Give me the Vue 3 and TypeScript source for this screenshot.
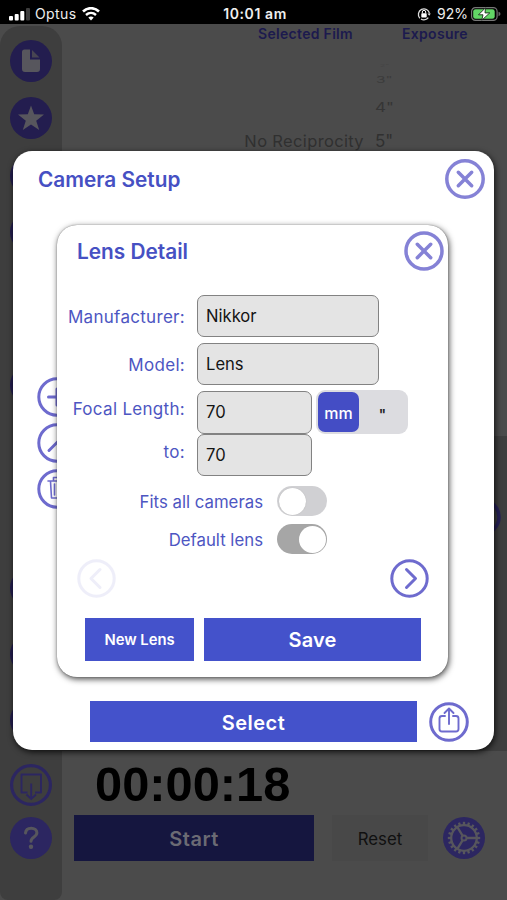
<script setup lang="ts">
import { ref } from 'vue'

interface RailItem { id: string; kind: string; gap: number }

const rail: RailItem[] = [
  { id: 'file', kind: 'file', gap: 0 },
  { id: 'favourite', kind: 'star', gap: 15 },
  { id: 'slot-a', kind: 'disc', gap: 16 },
  { id: 'slot-b', kind: 'disc', gap: 14 },
  { id: 'slot-c', kind: 'disc', gap: 111 },
  { id: 'slot-d', kind: 'disc', gap: 161 },
  { id: 'slot-e', kind: 'disc', gap: 24 },
  { id: 'slot-f', kind: 'disc', gap: 24 },
  { id: 'download', kind: 'download', gap: 23 },
  { id: 'help', kind: 'help', gap: 11 },
]

const manufacturer = ref('Nikkor')
const model = ref('Lens')
const focalFrom = ref('70')
const focalTo = ref('70')
const fitsAll = ref(false)
const defaultLens = ref(true)
const teeth = Array.from({ length: 20 }, (_, i) => i * 18)
</script>

<template>
  <div class="phone">
    <header class="status">
      <div class="carrier">
        <svg class="signal" width="22" height="14" viewBox="0 0 22 14">
          <rect x="0" y="9" width="4" height="4.500" rx="1" fill="#fff" />
          <rect x="5.700" y="7" width="4" height="6.500" rx="1" fill="#fff" />
          <rect x="11.300" y="4" width="4" height="9.500" rx="1" fill="#fff" />
          <rect x="17" y="1" width="4" height="12.500" rx="1" fill="#3d3d3d" />
        </svg>
        <span class="optus">Optus</span>
        <svg width="18" height="14" viewBox="0 0 18 14">
          <path d="M1 4.500 C5.500 0 12.500 0 17 4.500" fill="none" stroke="#fff" stroke-width="2.500" />
          <path d="M4 8 C7 5.200 11 5.200 14 8" fill="none" stroke="#fff" stroke-width="2.400" />
          <path d="M6.300 10.500 Q9 8.400 11.700 10.500 L9 13.400Z" fill="#fff" />
        </svg>
      </div>
      <div class="clock">10:01 am</div>
      <div class="power">
        <svg width="14" height="14" viewBox="0 0 14 14">
          <path d="M2.800 11.200 A5.600 5.600 0 1 1 12.500 6.500 M4 12 A5.600 5.600 0 0 0 11.300 10.600" fill="none" stroke="#ddd" stroke-width="1.300" />
          <rect x="4.300" y="6.200" width="5.400" height="4.200" rx=".7" fill="#fff" />
          <path d="M5.300 6.300V5a1.700 1.700 0 0 1 3.400 0v1.300" fill="none" stroke="#fff" stroke-width="1" />
          <path d="M10.500 6.500h3.300l-1.600 2.300z" fill="#ddd" />
        </svg>
        <span class="percent">92%</span>
        <svg width="30" height="14" viewBox="0 0 30 14">
          <rect x=".6" y=".6" width="25.500" height="12.800" rx="3.800" fill="none" stroke="#777" stroke-width="1.200" />
          <rect x="2.200" y="2.200" width="21.500" height="9.600" rx="2.300" fill="#62d666" />
          <path d="M27.500 4.800q2 .6 2 2.200t-2 2.200z" fill="#666" />
          <path d="M14.500 .8 L7.500 7.800 H12 L10.800 13.200 L18.800 5.900 H14 Z" fill="#fff" stroke="#162d17" stroke-width=".9" />
        </svg>
      </div>
    </header>

    <div class="workspace">
      <nav class="rail">
        <div v-for="item in rail" :key="item.id" class="rail-item" :style="{ marginTop: item.gap + 'px' }">
          <svg width="42" height="42" viewBox="0 0 42 42">
            <circle v-if="item.kind !== 'download'" cx="21" cy="21" r="21" :fill="item.kind === 'help' ? '#2c2661' : '#231d4f'" />
            <g v-if="item.kind === 'file'" fill="#57565d">
              <path d="M14.500 9.500H20V19.500H30V29a3 3 0 0 1-3 3H15a3 3 0 0 1-3-3V12a2.500 2.500 0 0 1 2.500-2.500Z" />
              <path d="M22 10L29.500 17.500H22Z" fill="#484552" />
            </g>
            <path v-if="item.kind === 'star'" d="M21 8.500 24.200 17.300 34 17.600 26.200 23.700 29.200 33 21 27.400 12.800 33 15.800 23.700 8 17.600 17.800 17.300Z" fill="#57565d" />
            <g v-if="item.kind === 'download'" fill="none" stroke="#2c2661">
              <circle cx="21" cy="21" r="19.400" stroke-width="3.200" />
              <path d="M17.500 28.500H11.500V10.500H31V28.500H25" stroke-width="1.900" stroke-linejoin="round" />
              <path d="M21.200 19.500V35M16.500 30.500 21.200 35 26 30.500" stroke-width="1.900" />
            </g>
            <g v-if="item.kind === 'help'">
              <path d="M15.500 16c.3-3.200 2.700-4.700 5.700-4.700 3.300 0 5.700 1.700 5.700 4.500 0 4.300-5.900 4-5.900 8.500" fill="none" stroke="#57565d" stroke-width="3" stroke-linecap="round" />
              <circle cx="21" cy="29.800" r="2.200" fill="#57565d" />
            </g>
          </svg>
        </div>
      </nav>

      <main class="main">
        <div class="columns">
          <section class="film">
            <h3>Selected Film</h3>
            <p>No Reciprocity</p>
          </section>
          <section class="exposure">
            <h3>Exposure</h3>
            <ul>
              <li class="far">2"</li>
              <li class="near">3"</li>
              <li class="close">4"</li>
              <li class="full">5"</li>
            </ul>
          </section>
        </div>
        <div class="lower">
          <svg width="38" height="38" viewBox="0 0 38 38"><circle cx="19" cy="19" r="17" fill="none" stroke="#272158" stroke-width="3.500" /></svg>
        </div>
        <div class="timer">00:00:18</div>
        <div class="controls">
          <button class="start">Start</button>
          <button class="reset">Reset</button>
          <svg class="gear" width="42" height="42" viewBox="0 0 42 42">
            <circle cx="21" cy="21" r="21" fill="#2c2661" />
            <g fill="none" stroke="#57565d" stroke-width="2.300">
              <circle cx="21" cy="21" r="12.800" />
              <circle cx="21" cy="21" r="2.500" stroke-width="2" />
              <path d="M23.600 21H33M19.700 18.800 14.500 10.300M19.700 23.200 14.500 31.700" />
              <path v-for="angle in teeth" :key="angle" d="M21 8.500V4.800" :transform="`rotate(${angle} 21 21)`" stroke-width="2.300" />
            </g>
          </svg>
        </div>
      </main>
    </div>

    <section class="camera-dialog">
      <header class="dialog-head">
        <h2>Camera Setup</h2>
        <svg class="x-icon" width="40" height="40" viewBox="0 0 40 40">
          <circle cx="20" cy="20" r="18.200" />
          <path d="M13.300 13.300 26.700 26.700M26.700 13.300 13.300 26.700" />
        </svg>
      </header>
      <div class="tools">
        <svg width="40" height="40" viewBox="0 0 40 40"><circle cx="20" cy="20" r="18.200" /><path d="M20 12V28M11.500 20H28.500" /></svg>
        <svg width="40" height="40" viewBox="0 0 40 40"><circle cx="20" cy="20" r="18.200" /><path d="M12 27.500 27 12.500" /></svg>
        <svg width="40" height="40" viewBox="0 0 40 40"><circle cx="20" cy="20" r="18.200" /><path d="M11 12H29M13.500 12.500 14.500 29H25.500L26.500 12.500M16.500 11.500V8.500H23.500V11.500M17.500 15V26M21 15V26" stroke-width="1.600" /></svg>
      </div>
      <footer class="dialog-foot">
        <button class="solid select">Select</button>
        <svg class="share" width="40" height="40" viewBox="0 0 40 40">
          <circle cx="20" cy="20" r="18.300" />
          <path d="M16 14H13a2.500 2.500 0 0 0-2.500 2.500V27a2.500 2.500 0 0 0 2.500 2.500H27a2.500 2.500 0 0 0 2.500-2.500V16.500A2.500 2.500 0 0 0 27 14H24M20 22V7M15.500 11 20 6.500 24.500 11" stroke-width="1.900" />
        </svg>
      </footer>

      <section class="lens-dialog">
        <header class="lens-head">
          <h2>Lens Detail</h2>
          <svg class="x-icon" width="40" height="40" viewBox="0 0 40 40">
            <circle cx="20" cy="20" r="18" />
            <path d="M13.300 13.300 26.700 26.700M26.700 13.300 13.300 26.700" />
          </svg>
        </header>
        <div class="form">
          <div class="row maker"><label>Manufacturer:</label><div class="field wide">{{ manufacturer }}</div></div>
          <div class="row model"><label>Model:</label><div class="field wide">{{ model }}</div></div>
          <div class="row focal">
            <label>Focal Length:</label><div class="field">{{ focalFrom }}</div>
            <div class="units"><span class="unit active">mm</span><span class="unit inch">"</span></div>
          </div>
          <div class="row to"><label>to:</label><div class="field">{{ focalTo }}</div></div>
        </div>
        <div class="switches">
          <div class="switch-row"><span class="fits">Fits all cameras</span><i class="toggle" :class="{ on: fitsAll }"></i></div>
          <div class="switch-row"><span class="default">Default lens</span><i class="toggle" :class="{ on: defaultLens }"></i></div>
        </div>
        <div class="pager">
          <svg class="faded" width="39" height="39" viewBox="0 0 39 39"><circle cx="19.500" cy="19.500" r="17.700" /><path d="M23 10.500 14 19.500 23 28.500" /></svg>
          <svg width="39" height="39" viewBox="0 0 39 39"><circle cx="19.500" cy="19.500" r="17.700" /><path d="M16.500 10.500 25.500 19.500 16.500 28.500" /></svg>
        </div>
        <div class="actions">
          <button class="solid new">New Lens</button>
          <button class="solid save">Save</button>
        </div>
      </section>
    </section>
  </div>
</template>

<style>
body { margin: 0; background: #4b4b4b; }
</style>

<style scoped>
* { box-sizing: border-box; }
h2, h3, p, ul { margin: 0; padding: 0; }
ul { list-style: none; }
svg { display: block; flex: none; }
button { border: 0; padding: 0; font-family: inherit; }
.phone { position: relative; width: 507px; height: 900px; overflow: hidden; background: #4b4b4b; font-family: Inter, "Liberation Sans", sans-serif; white-space: nowrap; }
.status { height: 24px; background: #000; color: #eee; display: grid; grid-template-columns: 1fr 80px 1fr; align-items: center; font-size: 14px; padding: 3px 6px 0 9px; }
.carrier { display: flex; align-items: center; }
.optus { margin: 0 5px 0 4px; letter-spacing: .4px; }
.clock { text-align: center; font-weight: 600; font-size: 14px; letter-spacing: .6px; }
.power { display: flex; align-items: center; justify-content: flex-end; }
.percent { margin: 0 3px 0 6px; }
.workspace { display: flex; height: 876px; }
.rail { width: 62px; margin-top: 2px; padding: 14px 10px 0; background: #3e3e3e; border-radius: 20px 20px 8px 8px; }
.main { width: 445px; display: flex; flex-direction: column; }
.columns { display: flex; height: 412px; color: #303030; }
.columns h3 { color: #1c1a4e; font-size: 14px; line-height: 20px; font-weight: 600; letter-spacing: .3px; }
.film { width: 302px; display: flex; flex-direction: column; align-items: flex-end; }
.film h3 { margin-right: 11px; }
.film p { margin-top: 87px; font-size: 16.500px; line-height: 20px; letter-spacing: .35px; }
.exposure { padding-left: 11px; }
.exposure h3 { margin-left: 27px; }
.exposure li { font-size: 17px; line-height: 20px; height: 20px; width: 20px; transform-origin: center; }
.exposure .far { margin-top: 12px; transform: scale(.5, .2); opacity: .25; }
.exposure .near { margin-top: -6px; transform: scale(.9, .5); opacity: .55; }
.exposure .close { margin-top: 7px; transform: scaleY(.75); opacity: .8; }
.exposure .full { margin-top: 14px; }
.lower { height: 315px; background: #3e3e3e; padding: 62px 6px 0 0; display: flex; justify-content: flex-end; align-items: flex-start; }
.timer { height: 64px; padding: 5px 0 0 33px; color: #000; font: 700 48.800px/56px "Liberation Sans", sans-serif; }
.controls { display: flex; align-items: center; padding-left: 12px; height: 46px; }
.start { width: 240px; height: 46px; background: #15163f; color: #6b6b74; font-size: 20px; font-weight: 600; letter-spacing: .5px; padding-top: 1px; }
.reset { width: 96px; height: 46px; margin-left: 18px; background: #484848; color: #101010; font-size: 16.800px; padding-top: 1px; }
.gear { margin-left: 15px; }

.camera-dialog { position: absolute; left: 13px; top: 151px; width: 481px; height: 599px; border-radius: 19px; background: #fff; box-shadow: 1px 2px 6px #000c; display: flex; flex-direction: column; }
.camera-dialog svg { fill: none; stroke: #6e6bce; stroke-width: 3; stroke-linecap: round; stroke-linejoin: round; }
.camera-dialog h2 { color: #4650c3; font-size: 20.800px; font-weight: 600; line-height: 26px; padding-top: 2px; }
.camera-dialog .x-icon { stroke: #8582d6; stroke-width: 3.500; }
.dialog-head { display: flex; justify-content: space-between; align-items: center; padding: 8px 9px 0 25px; }
.tools { display: flex; flex-direction: column; gap: 6px; padding: 178px 0 0 24px; }
.dialog-foot { margin-top: auto; display: flex; align-items: center; gap: 12px; padding: 0 0 8px 77px; }
.solid { background: #4452cb; color: #fff; font-weight: 600; }
.select { width: 327px; height: 41px; font-size: 20px; letter-spacing: .45px; padding-top: 2px; }
.lens-dialog { position: absolute; left: 44px; top: 74px; width: 391px; height: 452px; border-radius: 20px; background: #fff; box-shadow: 1px 2px 6px #000b, 0 0 1px #777; }
.lens-head { display: flex; justify-content: space-between; align-items: center; padding: 6px 4px 0 20px; }
.form { padding-top: 24px; color: #4d56c2; font-size: 17px; }
.row { display: flex; align-items: center; }
.row label { width: 128px; margin-right: 12px; text-align: right; letter-spacing: .3px; padding-top: 2px; }
.field { width: 115px; height: 42px; padding: 0 9px 0 8px; display: flex; align-items: center; border: 1.500px solid #828282; border-radius: 7px; background: #e4e4e4; color: #151515; font-size: 16.600px; }
.wide { width: 182px; }
.model { margin-top: 6px; }
.focal { margin-top: 5px; height: 44px; }
.focal .field { height: 43px; }
.focal label, .to label { padding: 0 0 7px; }
.units { width: 92px; height: 44px; margin-left: 4px; padding: 2px; display: flex; border-radius: 9px; background: #dcdce0; color: #222; }
.unit { flex: 1; display: flex; align-items: center; justify-content: center; font-size: 16px; border-radius: 7px; padding-top: 2px; }
.unit.active { flex: 0 0 41px; background: #444dc5; color: #fff; font-weight: 500; }
.unit.inch { font-weight: 600; font-size: 14px; padding-top: 5px; }
.switches { display: flex; flex-direction: column; gap: 8px; padding: 10px 0 0; color: #4d56c2; font-size: 16.800px; }
.switch-row { display: flex; align-items: center; justify-content: flex-end; gap: 14px; padding-right: 121px; height: 30px; }
.switch-row span { padding-top: 1px; }
.toggle { width: 50px; height: 30px; padding: 1.500px; display: flex; border-radius: 15px; background: #d0d0d3; }
.toggle::before { content: ''; width: 27px; height: 27px; border-radius: 50%; background: #fff; box-shadow: 0 0 1px #aaa; }
.toggle.on { background: #a6a6a6; justify-content: flex-end; }
.pager { display: flex; justify-content: space-between; padding: 5px 19px 0 20px; }
.pager .faded { opacity: .11; }
.actions { display: flex; gap: 10px; padding: 20px 27px 0 28px; }
.new { width: 109px; height: 43px; font-size: 14.800px; }
.save { width: 217px; height: 43px; font-size: 20px; letter-spacing: .2px; }
</style>
